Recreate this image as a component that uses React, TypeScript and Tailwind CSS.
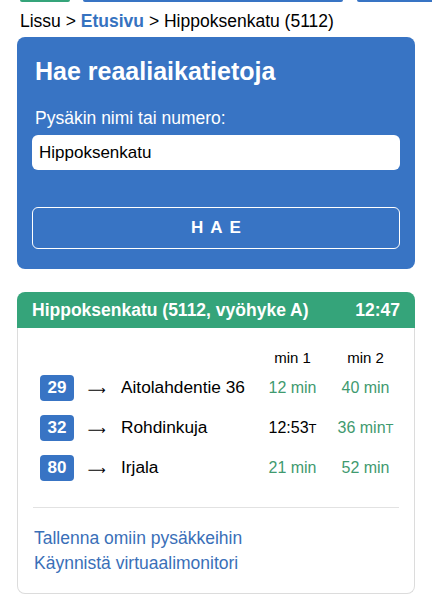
export default function App() {
  const rows = [
    { line: '29', dest: 'Aitolahdentie 36', t1: '12 min', t1Green: true, t1Suffix: '', t2: '40 min', t2Suffix: '' },
    { line: '32', dest: 'Rohdinkuja', t1: '12:53', t1Green: false, t1Suffix: 'T', t2: '36 min', t2Suffix: 'T' },
    { line: '80', dest: 'Irjala', t1: '21 min', t1Green: true, t1Suffix: '', t2: '52 min', t2Suffix: '' },
  ]

  return (
    <div className="w-[432px] min-h-[594px] bg-white text-black font-['Liberation_Sans',Arial,sans-serif]">
      {/* bottoms of the nav buttons, scrolled out of view */}
      <div className="flex h-[2px]">
        <div className="ml-[20px] w-[50px] bg-[#35a47a] rounded-b-[2px]" />
        <div className="ml-[13px] w-[260px] bg-[#3874c4] rounded-b-[2px]" />
        <div className="ml-[14px] flex-1 bg-[#3874c4] rounded-bl-[2px]" />
      </div>

      <nav className="px-[20px] pt-[9px] text-[17.5px] leading-[20px]">
        Lissu &gt; <a className="font-bold text-[#3572c0]">Etusivu</a> &gt; Hippoksenkatu (5112)
      </nav>

      <section className="mx-[17px] mt-[6px] rounded-[8px] bg-[#3874c4] px-[15px] pt-[18px] pb-[20px] text-white">
        <h1 className="px-[3px] text-[25px] leading-[32px] font-bold">Hae reaaliaikatietoja</h1>
        <label className="mt-[21px] block px-[3px] text-[17.5px] leading-[20px]">Pysäkin nimi tai numero:</label>
        <input
          readOnly
          value="Hippoksenkatu"
          className="mt-[7px] block h-[35px] w-full rounded-[6px] bg-white px-[7px] text-[17px] text-black outline-none"
        />
        <button className="mt-[37px] flex h-[42px] w-full items-center justify-center rounded-[6px] border border-white pl-[7px] text-[17px] font-bold tracking-[7px]">
          HAE
        </button>
      </section>

      <section className="mx-[17px] mt-[23px] mb-[2px]">
        <div className="flex h-[36px] items-center justify-between rounded-t-[8px] bg-[#35a47a] px-[15px] text-[17.5px] font-bold text-white">
          <span>Hippoksenkatu (5112, vyöhyke A)</span>
          <span>12:47</span>
        </div>
        <div className="rounded-b-[8px] border border-t-0 border-[#dcdcdc] pt-[20px] pb-[17px]">
          <div className="grid grid-cols-[34px_47px_1fr_73px_73px] items-center pl-[22px] pr-[12px]">
            <div className="col-start-4 h-[20px] text-center text-[15px] leading-[20px]">min 1</div>
            <div className="h-[20px] text-center text-[15px] leading-[20px]">min 2</div>
            {rows.map(r => (
              <div key={r.line} className="contents">
                <div className="flex h-[40px] items-center">
                  <span className="flex h-[26px] w-[34px] items-center justify-center rounded-[4px] bg-[#3874c4] text-[17px] font-bold text-white">
                    {r.line}
                  </span>
                </div>
                <div className="pt-[3px] pr-[2px] text-center font-['DejaVu_Sans',sans-serif] text-[12.5px] leading-[20px]">⟶</div>
                <div className="text-[17.3px]">{r.dest}</div>
                <div className={`text-center text-[16px] ${r.t1Green ? 'text-[#3f9a6f]' : 'text-black'}`}>
                  {r.t1}
                  {r.t1Suffix && <span className="text-[13px]">{r.t1Suffix}</span>}
                </div>
                <div className="text-center text-[16px] text-[#3f9a6f]">
                  {r.t2}
                  {r.t2Suffix && <span className="text-[13px]">{r.t2Suffix}</span>}
                </div>
              </div>
            ))}
          </div>
          <hr className="mx-[15px] mt-[19px] border-[#e2e2e2]" />
          <div className="mt-[18px] px-[16px] text-[17.5px] leading-[25px] text-[#3a6fb8]">
            <a className="block">Tallenna omiin pysäkkeihin</a>
            <a className="block">Käynnistä virtuaalimonitori</a>
          </div>
        </div>
      </section>
    </div>
  )
}
